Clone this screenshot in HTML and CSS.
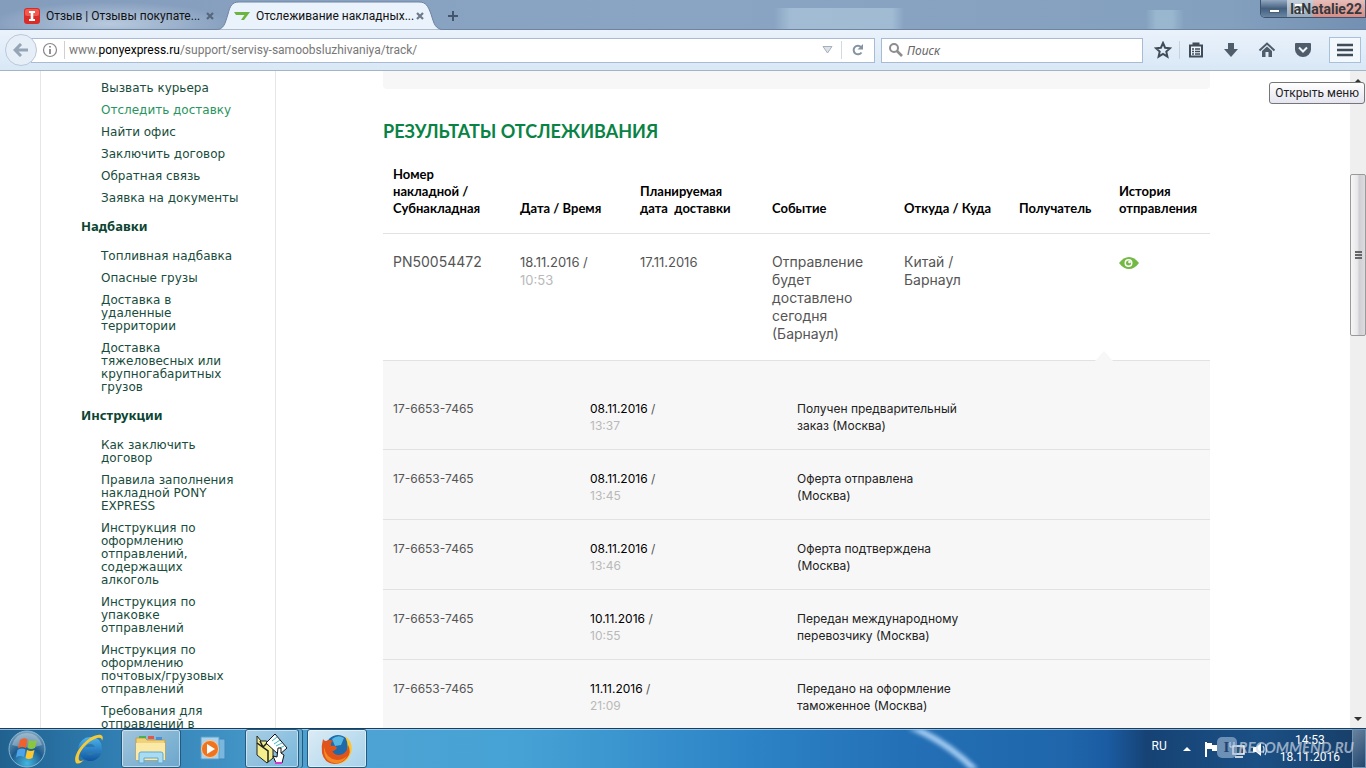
FILE: index.html
```html
<!DOCTYPE html>
<html lang="ru">
<head>
<meta charset="utf-8">
<title>Отслеживание накладных</title>
<link rel="stylesheet" href="styles.css">
</head>
<body>
<header class="tabbar">
  <div class="tab tab-idle">
    <svg class="icon16" viewBox="0 0 16 16"><rect width="16" height="16" rx="3" fill="#d92b28"/><rect x="1" y="1" width="14" height="7" rx="2" fill="#ee5a50"/><path d="M5 3h6v2H9.300v6H11v2H5v-2h1.700V5H5z" fill="#fff"/></svg>
    <span class="tab-title">Отзыв | Отзывы покупате...</span>
    <button class="tab-close" aria-label="Закрыть"><svg width="10" height="10" viewBox="0 0 10 10"><path d="M2 2l6 6M8 2l-6 6" stroke="#56677c" stroke-width="2.200"/></svg></button>
  </div>
  <div class="tab tab-active">
    <svg class="tab-shape" viewBox="0 0 230 30" preserveAspectRatio="none"><path d="M0 30C8 29 9 24 12 14C14 6 16 2 23 2H203C210 2 212 6 215 14C218 24 219 29 228 30Z" fill="#eaf2fb" stroke="#6e84a0"/></svg>
    <svg class="icon16" viewBox="0 0 16 16"><path d="M0 4h16l-6 8h-3l3.500-5H2z" fill="#6cb33f"/></svg>
    <span class="tab-title">Отслеживание накладных...</span>
    <button class="tab-close" aria-label="Закрыть"><svg width="10" height="10" viewBox="0 0 10 10"><path d="M2 2l6 6M8 2l-6 6" stroke="#6d7a8a" stroke-width="2.200"/></svg></button>
  </div>
  <button class="tab-new" aria-label="Новая вкладка"><svg width="12" height="12" viewBox="0 0 12 12"><path d="M6 1v10M1 6h10" stroke="#45566c" stroke-width="2"/></svg></button>
  <div class="window-buttons">
    <button class="wb wb-min" aria-label="Свернуть"><span></span></button>
    <button class="wb wb-max" aria-label="Развернуть"><span></span></button>
    <button class="wb wb-close" aria-label="Закрыть окно"></button>
    <span class="stamp">laNatalie22</span>
  </div>
</header>

<nav class="toolbar">
  <button class="back" aria-label="Назад"><svg width="16" height="14" viewBox="0 0 16 14"><path d="M8 1L2 7l6 6M3 7h12" fill="none" stroke="#95a5b6" stroke-width="3"/></svg></button>
  <div class="urlbar">
    <svg class="info" viewBox="0 0 16 16"><circle cx="8" cy="8" r="6.500" fill="none" stroke="#888" stroke-width="1.200"/><path d="M8 7v5M8 4v1.600" stroke="#777" stroke-width="1.600"/></svg>
    <div class="url" role="textbox" aria-label="Адрес">www.<b>ponyexpress.ru</b>/support/servisy-samoobsluzhivaniya/track/</div>
    <svg class="drop" width="12" height="10" viewBox="0 0 12 10"><path d="M1 1.500h9L5.500 8z" fill="#dde2e8" stroke="#a4b0bd"/></svg>
    <button class="reload" aria-label="Обновить"><svg width="14" height="14" viewBox="0 0 14 14"><path d="M10.500 9.500A4.300 4.300 0 1 1 10 4" fill="none" stroke="#8494a5" stroke-width="2"/><path d="M12 1v5.500H6.500z" fill="#8494a5"/></svg></button>
  </div>
  <label class="search">
    <svg width="16" height="16" viewBox="0 0 16 16"><circle cx="6" cy="6" r="4" fill="none" stroke="#8d8d8d" stroke-width="2"/><path d="M9 9l5 5" stroke="#8d8d8d" stroke-width="2.600"/></svg>
    <input type="text" placeholder="Поиск" aria-label="Поиск">
  </label>
  <div class="tools">
    <button aria-label="В закладки"><svg width="18" height="18" viewBox="0 0 18 18"><path d="M9 2l2.100 4.700 5 .5-3.800 3.400 1.100 5L9 13l-4.400 2.600 1.100-5L1.900 7.200l5-.5z" fill="none" stroke="#3f4c5a" stroke-width="2"/></svg></button>
    <button class="lined" aria-label="Закладки"><svg width="18" height="18" viewBox="0 0 18 18"><path d="M3 4.500h12v11H3zM6.500 2.500h5v2h-5z" fill="#eef5fc" stroke="#3f4c5a" stroke-width="2"/><path d="M5 8h2M8 8h5M5 10.500h2M8 10.500h5M5 13h2M8 13h5" stroke="#3f4c5a" stroke-width="1.400"/></svg></button>
    <button aria-label="Загрузки"><svg width="18" height="18" viewBox="0 0 18 18"><path d="M6 2h6v6h4l-7 8-7-8h4z" fill="#4f5c6a"/></svg></button>
    <button aria-label="Домой"><svg width="18" height="18" viewBox="0 0 18 18"><path d="M1.500 9.500L9 2.500l7.500 7" fill="none" stroke="#4f5c6a" stroke-width="2"/><path d="M4 10l5-4.500 5 4.500v6h-3.500v-5h-3v5H4z" fill="#4f5c6a"/></svg></button>
    <button aria-label="Pocket"><svg width="18" height="18" viewBox="0 0 18 18"><path d="M1 3q0-1 1-1h14q1 0 1 1v5.500a8 7.500 0 0 1-16 0z" fill="#4f5c6a"/><path d="M5 6.500l4 4 4-4" fill="none" stroke="#eef5fc" stroke-width="2"/></svg></button>
    <button class="menu" aria-label="Открыть меню"><svg width="16" height="14" viewBox="0 0 16 14"><path d="M0 2h16M0 7h16M0 12h16" stroke="#3f4c5a" stroke-width="2.600"/></svg></button>
  </div>
  <div class="tooltip" role="tooltip">Открыть меню</div>
</nav>

<div class="viewport">
  <aside class="sidebar">
    <ul>
      <li><a href="#">Вызвать курьера</a></li>
      <li><a class="current" href="#">Отследить доставку</a></li>
      <li><a href="#">Найти офис</a></li>
      <li><a href="#">Заключить договор</a></li>
      <li><a href="#">Обратная связь</a></li>
      <li><a href="#">Заявка на документы</a></li>
    </ul>
    <h3>Надбавки</h3>
    <ul>
      <li><a href="#">Топливная надбавка</a></li>
      <li><a href="#">Опасные грузы</a></li>
      <li><a href="#">Доставка в<br>удаленные<br>территории</a></li>
      <li><a href="#">Доставка<br>тяжеловесных или<br>крупногабаритных<br>грузов</a></li>
    </ul>
    <h3>Инструкции</h3>
    <ul>
      <li><a href="#">Как заключить<br>договор</a></li>
      <li><a href="#">Правила заполнения<br>накладной PONY<br>EXPRESS</a></li>
      <li><a href="#">Инструкция по<br>оформлению<br>отправлений,<br>содержащих<br>алкоголь</a></li>
      <li><a href="#">Инструкция по<br>упаковке<br>отправлений</a></li>
      <li><a href="#">Инструкция по<br>оформлению<br>почтовых/грузовых<br>отправлений</a></li>
      <li><a href="#">Требования для<br>отправлений в</a></li>
    </ul>
  </aside>

  <main class="content">
    <div class="panel-end"></div>
    <h1>РЕЗУЛЬТАТЫ ОТСЛЕЖИВАНИЯ</h1>
    <table class="results">
      <colgroup><col class="c-num"><col class="c-date"><col class="c-plan"><col class="c-plan"><col class="c-route"><col class="c-to"><col class="c-hist"></colgroup>
      <thead>
        <tr><th>Номер<br>накладной /<br>Субнакладная</th><th>Дата / Время</th><th>Планируемая<br>дата&nbsp; доставки</th><th>Событие</th><th>Откуда / Куда</th><th>Получатель</th><th>История<br>отправления</th></tr>
      </thead>
      <tbody>
        <tr><td>PN50054472</td><td class="date">18.11.2016 /<br><span class="time">10:53</span></td><td class="date">17.11.2016</td><td>Отправление<br>будет<br>доставлено<br>сегодня<br>(Барнаул)</td><td>Китай /<br>Барнаул</td><td></td>
        <td><button class="eye" aria-label="История отправления"><svg width="20" height="14" viewBox="0 0 20 14"><path d="M0 7Q4.500 1 10 1t10 6q-4.500 6-10 6T0 7z" fill="#74b943"/><circle cx="9.500" cy="7" r="4" fill="#fff"/><circle cx="9.500" cy="7" r="2.500" fill="#74b943"/><circle cx="10.500" cy="6" r="1.300" fill="#fff"/></svg></button></td></tr>
      </tbody>
    </table>
    <div class="history">
      <svg class="notch" width="18" height="10" viewBox="0 0 18 10"><path d="M0 10L9 0l9 10z" fill="#f7f7f7"/></svg>
      <table>
        <colgroup><col class="h-num"><col class="h-date"><col class="h-date"><col></colgroup>
        <tbody>
          <tr><td>17-6653-7465</td><td><b>08.11.2016</b> /<br><span class="time">13:37</span></td><td class="event">Получен предварительный<br>заказ (Москва)</td><td></td></tr>
          <tr><td>17-6653-7465</td><td><b>08.11.2016</b> /<br><span class="time">13:45</span></td><td class="event">Оферта отправлена<br>(Москва)</td><td></td></tr>
          <tr><td>17-6653-7465</td><td><b>08.11.2016</b> /<br><span class="time">13:46</span></td><td class="event">Оферта подтверждена<br>(Москва)</td><td></td></tr>
          <tr><td>17-6653-7465</td><td><b>10.11.2016</b> /<br><span class="time">10:55</span></td><td class="event">Передан международному<br>перевозчику (Москва)</td><td></td></tr>
          <tr><td>17-6653-7465</td><td><b>11.11.2016</b> /<br><span class="time">21:09</span></td><td class="event">Передано на оформление<br>таможенное (Москва)</td><td></td></tr>
        </tbody>
      </table>
    </div>
  </main>

  <div class="scrollbar">
    <button aria-label="Вверх"><svg width="8" height="5" viewBox="0 0 8 5"><path d="M0 5l4-4 4 4z" fill="#333"/></svg></button>
    <div class="track"><div class="thumb"><span></span><span></span><span></span></div></div>
    <button aria-label="Вниз"><svg width="8" height="5" viewBox="0 0 8 5"><path d="M0 0l4 4 4-4z" fill="#333"/></svg></button>
  </div>
</div>

<footer class="taskbar">
  <svg class="streak" viewBox="0 0 200 40"><path d="M100 -4Q142 12 174 46" fill="none" stroke="#a9d0f5" stroke-width="6"/></svg>
  <button class="start" aria-label="Пуск"><svg width="38" height="38" viewBox="0 0 38 38"><defs><radialGradient id="orb" cx=".5" cy=".9" r=".9"><stop offset="0" stop-color="#43b7e0"/><stop offset=".5" stop-color="#1e5b8c"/><stop offset="1" stop-color="#7fa5c0"/></radialGradient></defs><circle cx="19" cy="19" r="18" fill="url(#orb)" stroke="#86b6d3"/><path d="M4 15Q8 3 19 3t15 12q-14 5-30 0z" fill="#fff" opacity=".3"/><path d="M12 10q4-3 7.500-.5L18 18q-4-2-8 .5z" fill="#f0612c"/><path d="M21 10q4 2 8 0l-2 8q-4 2-7.500 0z" fill="#8cc63f"/><path d="M9.500 20q4-2.500 8-.5L16 27q-4-2-8 .5z" fill="#4da3e8"/><path d="M19 20q4 2 7.500 0l-2 8q-4 2-7 0z" fill="#fdc72f"/></svg></button>
  <button class="task" aria-label="Internet Explorer"><svg width="32" height="32" viewBox="0 0 32 32"><defs><linearGradient id="ie" x1="0" y1="0" x2="0" y2="1"><stop offset="0" stop-color="#4db4ee"/><stop offset="1" stop-color="#0f559f"/></linearGradient></defs><path fill-rule="evenodd" d="M17 4a12 12 0 1 0 11.500 16H21.500a5 4.500 0 0 1-9-1H29Q30 4 17 4zM12.500 14a5 4.500 0 0 1 9.500 0z" fill="url(#ie)"/><path d="M3 30C-2 22 16 0 28 2q3 1 1 6 0-4-5-3C12 9 4 22 6 27q1 2 5 0-5 5-8 3z" fill="#f6c93a"/></svg></button>
  <button class="task framed" aria-label="Проводник"><svg width="34" height="32" viewBox="0 0 34 32"><path d="M2 5h9l2 2h18v20H2z" fill="#f0d27a" stroke="#c79f45"/><path d="M5 3h7v2H5z" fill="#4caf50"/><path d="M14 3h6v3h-6z" fill="#e2574c"/><path d="M22 4h6v3h-6z" fill="#4a90d9"/><path d="M2 10h29v17H2z" fill="#fbe9a8"/><path d="M5 30V21q0-2 2-2h20q2 0 2 2v9h-5v-5H10v5z" fill="#a9dbf3" stroke="#5ea9d1"/></svg></button>
  <button class="task" aria-label="Медиаплеер"><svg width="28" height="28" viewBox="0 0 28 28"><path d="M8 4h18v20H8z" fill="#79b7df" stroke="#4285b8"/><path d="M2 2h18v22H2z" fill="#a9d3ed" stroke="#5c9fc9"/><circle cx="11" cy="14" r="8.500" fill="#ee7420" stroke="#ffc791"/><path d="M8 9l8 5-8 5z" fill="#fff"/></svg></button>
  <button class="task framed stacked" aria-label="Документы"><svg width="32" height="32" viewBox="0 0 32 32"><path d="M1 3l4 5h5l7 4v13l-6 5L1 22z" fill="#f4ee8c" stroke="#222"/><path d="M1 10l11 8v11M4 8l3 6 4-4" fill="none" stroke="#222" stroke-width="1.500"/><path d="M19 1l12 14-8 7-13-12z" fill="#fff" stroke="#111"/><path d="M16 8l5-4M18 11l6-4M20 13l6-3M22 16l6-3" stroke="#38b9c5"/><path d="M22 15h3v5l3 2-2 8h-6l-3-7 4 1z" fill="#fff" stroke="#111"/><path d="M19 30h7" stroke="#d33bd3" stroke-width="2"/></svg></button>
  <button class="task framed bright" aria-label="Firefox"><svg width="32" height="32" viewBox="0 0 32 32"><circle cx="17" cy="14" r="12" fill="#1f6aa8"/><path d="M11 6q6-5 12-1l-3 7-6 1z" fill="#57b7e3"/><path d="M24 3q9 7 6 17-4 11-15 11l5-6q11-6 4-22z" fill="#fbc52d"/><path d="M2 6q1 2 3 2 4-2 7 0-3 2-2 5 5-1 6 2-3 4-5 3 4 6 11 3 5-3 5-9 4 7-1 13-5 6-13 6Q3 30 1 20 0 13 2 6z" fill="#e0541b"/><path d="M3 14q2 12 13 13 6 0 10-4-4 8-13 7Q2 28 3 14z" fill="#f58a25"/></svg></button>
  <div class="tray">
    <span class="lang">RU</span>
    <svg class="tray-up" width="8" height="5" viewBox="0 0 8 5"><path d="M0 5l4-4 4 4z" fill="#fff"/></svg>
    <svg class="tray-icons" width="64" height="20" viewBox="0 0 64 20"><path d="M2 3v15" stroke="#fff" stroke-width="2"/><path d="M3 4h5v2h5v6H8v-2H3z" fill="#fff"/><path d="M29 7h11v8H29zM31 18h8" fill="#35536f" stroke="#fff" stroke-width="1.500"/><path d="M26 3v5h4V3" fill="none" stroke="#fff"/><path d="M49 8h3l5-4v13l-5-4h-3z" fill="#fff"/><path d="M59 7q2 3 0 7M61 5q3 5 0 11" fill="none" stroke="#cde" stroke-width="1.200"/></svg>
    <div class="clock"><span>14:53</span><span>18.11.2016</span></div>
    <div class="show-desktop"></div>
    <div class="watermark"><span class="wm-badge">I</span><span>RECOMMEND.RU</span></div>
  </div>
</footer>
</body>
</html>
```
FILE: styles.css
```css
* { box-sizing: border-box; }
body {
  margin: 0;
  height: 100vh;
  display: flex;
  flex-direction: column;
  overflow: hidden;
  background: #fff;
  font-family: Roboto, "Noto Sans", sans-serif;
}
button { border: 0; padding: 0; background: none; display: flex; align-items: center; justify-content: center; font: inherit; }
svg { display: block; flex: none; }
a { color: inherit; text-decoration: none; }
ul { list-style: none; margin: 0; padding: 0; }

/* tabs */
.tabbar {
  flex: none;
  height: 30px;
  display: flex;
  position: relative;
  border-bottom: 1px solid #6e84a0;
  background:
    radial-gradient(ellipse 120px 22px at 110px 24px, rgba(200,216,232,.75), transparent),
    linear-gradient(90deg, transparent 774px, rgba(176,203,222,.6) 790px, rgba(176,203,222,.6) 892px, transparent 904px) 0 8px no-repeat,
    linear-gradient(90deg, transparent 1146px, rgba(166,198,216,.6) 1156px, rgba(166,198,216,.6) 1172px, transparent 1184px) 0 10px no-repeat,
    linear-gradient(90deg, #859dbd, #8aa5c3 50%, #84a0bf 90%, #7390b2);
}
.tab { position: relative; display: flex; align-items: center; padding-top: 2px; font-size: 12px; color: #111; }
.tab-idle { width: 222px; padding-left: 24px; }
.tab-active { width: 218px; padding-left: 12px; height: 30px; }
.tab-shape { position: absolute; left: -6px; top: 0; width: 230px; height: 30px; }
.icon16 { width: 16px; height: 16px; position: relative; }
.tab-title { flex: 1; margin-left: 6px; position: relative; white-space: nowrap; }
.tab-close { width: 12px; height: 12px; position: relative; }
.tab-idle .tab-close { margin-right: 6px; }
.tab-active .tab-close { margin-right: 14px; }
.tab-new { width: 26px; padding-top: 2px; }
.window-buttons {
  position: relative;
  margin-left: auto;
  width: 106px;
  height: 18px;
  display: flex;
  border: 1px solid #3d536e;
  border-top: 0;
  border-radius: 0 0 0 5px;
  overflow: hidden;
}
.wb { flex: 1; }
.wb-min { background: linear-gradient(#93a8c1, #44607f 50%, #6885a4); }
.wb-min span { width: 11px; height: 4px; margin-top: 4px; background: #fff; border: 1px solid #4d5f75; }
.wb-max { background: linear-gradient(#c3cfdb, #9aaabc); }
.wb-max span { width: 10px; height: 9px; border: 2px solid #fff; }
.wb-close { flex: 2; background: linear-gradient(#e6bdb9, #d98b84); }
.stamp { position: absolute; right: 3px; top: 0; font: bold 14px/18px Roboto, sans-serif; color: #35383c; }

/* toolbar */
.toolbar {
  flex: none;
  height: 41px;
  display: flex;
  align-items: center;
  position: relative;
  padding: 0 5px;
  background: linear-gradient(#eaf2fb, #d9e8f6);
  border-bottom: 1px solid #a3b4c9;
}
.back { width: 32px; height: 32px; border-radius: 50%; background: #e6eff8; border: 1px solid #b9c8d9; z-index: 1; }
.urlbar {
  flex: 1;
  height: 25px;
  margin-left: -6px;
  display: flex;
  align-items: center;
  background: #fff;
  border: 1px solid #a9bbd2;
  padding-left: 10px;
}
.info { width: 16px; height: 16px; }
.url { flex: 1; margin-left: 6px; padding-left: 4px; border-left: 1px solid #d0d0d0; font-size: 12px; line-height: 18px; color: #777; white-space: nowrap; overflow: hidden; }
.url b { font-weight: 400; color: #000; }
.drop { margin-right: 7px; }
.reload { width: 33px; height: 18px; border-left: 1px solid #d0dae5; }
.search {
  width: 262px;
  height: 25px;
  margin-left: 6px;
  display: flex;
  align-items: center;
  gap: 3px;
  padding-left: 6px;
  background: #fff;
  border: 1px solid #a9bbd2;
}
.search input { flex: 1; min-width: 0; border: 0; padding: 0; outline: 0; background: none; font: 12px "Noto Sans", sans-serif; }
.search input::placeholder { font-style: italic; color: #666; opacity: 1; }
.tools { display: flex; align-items: center; margin-left: 2px; }
.tools button { width: 36px; height: 26px; }
.tools .lined { width: 32px; border-left: 1px solid #c5d2e0; margin-left: -2px; margin-right: 2px; height: 18px; }
.tools .menu { width: 32px; margin-left: 8px; background: #f3f8fd; border: 1px solid #a9c0da; }
.tooltip {
  position: absolute;
  right: 1px;
  top: 52px;
  z-index: 3;
  padding: 0 5px;
  border: 1px solid #767676;
  border-radius: 3px;
  background: linear-gradient(#fff, #e4e5f0);
  font-size: 12px;
  line-height: 20px;
  color: #222;
}

/* page */
.viewport { flex: 1; min-height: 0; display: flex; overflow: hidden; position: relative; }
.sidebar {
  flex: none;
  width: 236px;
  margin-left: 40px;
  padding: 11px 0 0 40px;
  border: solid #e6e6e6;
  border-width: 0 1px;
  overflow: hidden;
  font: 12px/13px "DejaVu Sans", "Noto Sans", sans-serif;
  color: #184c3c;
}
.sidebar ul { padding-left: 20px; display: flex; flex-direction: column; gap: 9px; }
.sidebar a { display: block; }
.sidebar .current { color: #289460; }
.sidebar h3 { margin: 15px 0 17px; font: bold 13px/13px "Noto Sans", sans-serif; color: #0b4431; }
.content { flex: 1; min-width: 0; margin: 0 140px 0 107px; font: 14px/18px Inter, "Noto Sans", sans-serif; color: #555; }
.panel-end { height: 18px; background: #f7f7f7; border-radius: 0 0 4px 4px; }
h1 { margin: 30px 0 0; font: bold 18px/24px Lato, "Noto Sans", sans-serif; color: #098345; }
table { width: 100%; table-layout: fixed; border-collapse: collapse; }
th, td { padding: 0 10px; text-align: left; vertical-align: top; white-space: nowrap; }
.results { margin-top: 23px; }
.results th { vertical-align: bottom; padding-bottom: 16px; font: bold 13px/17px Lato, "Noto Sans", sans-serif; color: #000; border-bottom: 1px solid #e2e2e2; }
.results td { padding-top: 19px; padding-bottom: 17px; border-bottom: 1px solid #e2e2e2; }
.results .date { font-size: 13px; }
.c-num { width: 127px; }
.c-date { width: 120px; }
.c-plan { width: 132px; }
.c-route { width: 115px; }
.c-to { width: 100px; }
.c-hist { width: 101px; }
.time { color: #b9b9b9; }
.eye { height: 20px; }
.history { position: relative; padding-top: 19px; background: #f7f7f7; font-size: 12px; line-height: 17px; }
.notch { position: absolute; right: 97px; top: -10px; }
.history td { padding-top: 20px; padding-bottom: 15px; border-bottom: 1px solid #e2e2e2; }
.history b { font-weight: 400; color: #000; }
.event { color: #222; }
.h-num { width: 197px; }
.h-date { width: 207px; }

.scrollbar { flex: none; width: 16px; display: flex; flex-direction: column; background: #efefef; }
.scrollbar button { height: 18px; }
.track { flex: 1; padding-top: 85px; }
.thumb {
  height: 162px;
  display: flex;
  flex-direction: column;
  align-items: center;
  justify-content: center;
  gap: 1px;
  border: 1px solid #999;
  border-radius: 2px;
  background: linear-gradient(90deg, #f6f6f6, #e8e8ea 45%, #cfcfd4 60%, #dcdce0);
}
.thumb span { width: 7px; height: 2px; background: #666; }

/* taskbar */
.taskbar {
  flex: none;
  height: 40px;
  display: flex;
  align-items: center;
  position: relative;
  overflow: hidden;
  border-top: 1px solid #163f63;
  box-shadow: inset 0 1px 0 rgba(190,220,240,.7);
  background: linear-gradient(90deg, #20618f, #2f7db1 8%, #4fa3d3 24%, #46a2d5 38%, #2c83c6 55%, #2470b6 66%, #1f66ab 78%, #1b5ca3 81%, #164274 84%, #1b5085 92%, #173d66);
}
.streak { position: absolute; left: 806px; top: 0; width: 200px; height: 40px; filter: blur(2px); }
.start { width: 38px; margin: 0 13px 0 8px; }
.task { width: 60px; height: 39px; margin-right: 2px; }
.framed { border: 1px solid #235a7d; border-radius: 3px; background: linear-gradient(135deg, rgba(255,255,255,.55), rgba(255,255,255,.25)); box-shadow: inset 0 0 0 1px rgba(255,255,255,.5); }
.stacked { width: 54px; box-shadow: inset 0 0 0 1px rgba(255,255,255,.5), 3px 0 0 #65a9cd, 4px 0 0 #235a7d; margin-right: 8px; }
.bright { background: linear-gradient(135deg, rgba(255,255,255,.8), rgba(255,255,255,.5)); }
.tray { margin-left: auto; height: 100%; display: flex; align-items: center; position: relative; color: #fff; font-size: 12px; }
.lang { margin-right: 16px; padding-bottom: 5px; }
.tray-up { margin-right: 13px; }
.tray-icons { margin-right: 12px; }
.clock { display: flex; flex-direction: column; align-items: center; line-height: 17px; margin-right: 12px; }
.show-desktop { width: 14px; height: 100%; border: 1px solid #6f93b5; background: linear-gradient(135deg, rgba(255,255,255,.35), rgba(255,255,255,.05)); }
.watermark { position: absolute; right: 12px; top: 7px; display: flex; align-items: center; gap: 2px; font: italic bold 15px/22px Lato, sans-serif; color: rgba(205,215,228,.7); }
.wm-badge { width: 20px; height: 21px; border-radius: 5px; background: rgba(165,190,220,.6); color: #23456b; font: bold 15px/21px "Liberation Serif", serif; text-align: center; }
```
